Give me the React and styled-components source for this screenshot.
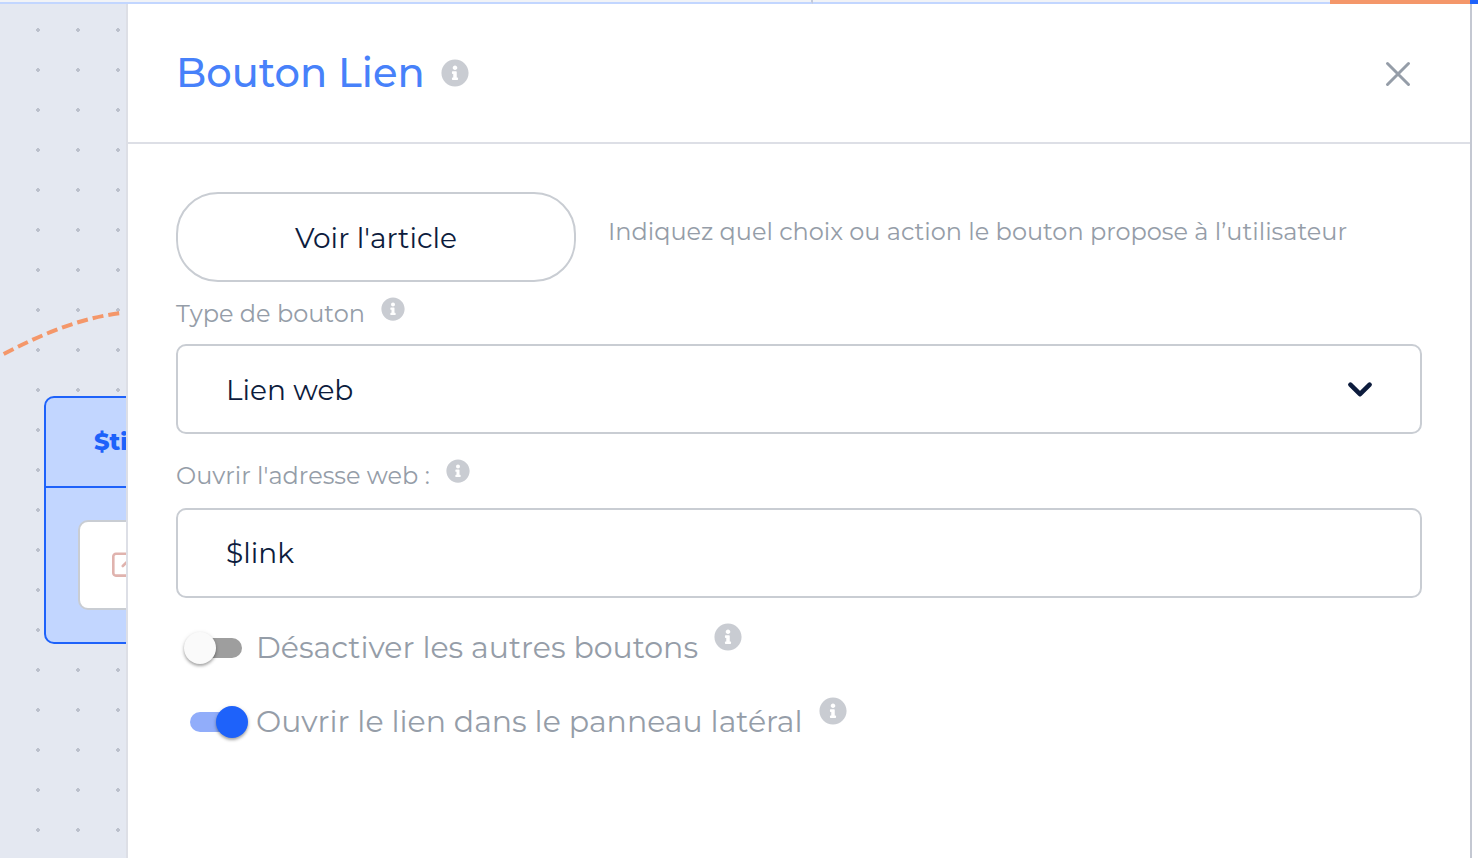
import React, { useState } from "react";
import styled, { createGlobalStyle } from "styled-components";
import { FaInfoCircle } from "react-icons/fa";

const color = {
  ink: "#0d1c3d",
  muted: "#959da8",
  line: "#c9cdd3",
  rule: "#dddfe6",
  edge: "#c4c8d2",
  info: "#c9ccd2",
  title: "#4781fa",
  blue: "#1e62fa",
  paleBlue: "#c2d6ff",
  orange: "#f4976a",
};

const GlobalStyle = createGlobalStyle`
  *, *::before, *::after { box-sizing: border-box; }
  body {
    margin: 0;
    background: #fff;
    font-family: Montserrat, Inter, "Liberation Sans", sans-serif;
    color: ${color.ink};
  }
`;

const Page = styled.div`
  display: flex;
  flex-direction: column;
  height: 100vh;
  overflow: hidden;
`;

const TopBar = styled.div`
  display: flex;
  flex: none;
  height: 4px;
`;

const TopSegment = styled.div`
  flex: ${(p) => p.$flex};
  background: #f1f3f7;
  border-bottom: 2px solid ${color.paleBlue};
  border-right: ${(p) => (p.$last ? "none" : "2px solid #c4cbdc")};
`;

const TopAccent = styled.div`
  flex: none;
  width: ${(p) => p.$width}px;
  background: ${(p) => p.$color};
`;

const Main = styled.main`
  display: flex;
  flex: 1;
  min-height: 0;
  padding-right: 6px;
`;

const Canvas = styled.section`
  position: relative;
  flex: none;
  width: 126px;
  overflow: hidden;
  background-color: #e4e8f1;
  background-image: radial-gradient(circle at 20px 20px, #bcc1cd 2px, transparent 2px);
  background-size: 40px 40px;
  background-position: 18px 6px;
`;

const Link = styled.svg`
  position: absolute;
  top: 296px;
  left: 0;
`;

const Node = styled.article`
  position: absolute;
  top: 392px;
  left: 44px;
  width: 480px;
  background: ${color.paleBlue};
  border: 2px solid ${color.blue};
  border-radius: 10px;
`;

const NodeTitle = styled.h2`
  margin: 0;
  padding: 0 48px;
  font-size: 24px;
  font-weight: 800;
  line-height: 88px;
  color: ${color.blue};
  border-bottom: 2px solid ${color.blue};
`;

const NodeBody = styled.div`
  padding: 32px;
`;

const NodeItem = styled.div`
  display: flex;
  align-items: center;
  height: 90px;
  padding: 0 32px;
  background: #fff;
  border: 2px solid ${color.line};
  border-radius: 10px;
`;

const Panel = styled.section`
  display: flex;
  flex: 1;
  flex-direction: column;
  min-width: 0;
  background: #fff;
  border-left: 2px solid ${color.rule};
  border-right: 2px solid ${color.edge};
`;

const Header = styled.header`
  display: flex;
  align-items: center;
  justify-content: space-between;
  height: 140px;
  padding: 0 48px;
  border-bottom: 2px solid ${color.rule};
`;

const TitleGroup = styled.div`
  display: flex;
  align-items: center;
  gap: 16px;
`;

const Title = styled.h1`
  margin: 0;
  font-size: 40px;
  font-weight: 500;
  line-height: 48px;
  color: ${color.title};
`;

const IconButton = styled.button`
  display: flex;
  flex: none;
  padding: 0;
  border: 0;
  background: none;
  color: ${(p) => p.$color || color.info};
  cursor: pointer;
`;

const CloseButton = styled(IconButton)`
  padding: 10px;
`;

const Form = styled.form`
  display: flex;
  flex-direction: column;
  padding: 48px;
`;

const ChoiceRow = styled.div`
  display: flex;
  align-items: center;
  gap: 32px;
`;

const TextField = styled.input`
  width: 100%;
  height: 90px;
  padding: 0 48px;
  font: inherit;
  font-size: 28px;
  color: ${color.ink};
  background: #fff;
  border: 2px solid ${color.line};
  border-radius: 10px;
  outline: none;
`;

const PillField = styled(TextField)`
  flex: none;
  width: 400px;
  padding-top: 2px;
  text-align: center;
  border-radius: 42px;
`;

const Hint = styled.label`
  padding-bottom: 10px;
  font-size: 24px;
  line-height: 28px;
  color: ${color.muted};
`;

const LabelRow = styled.div`
  display: flex;
  align-items: flex-start;
  gap: 16px;
  padding: ${(p) => p.$pad};
`;

const Label = styled.label`
  padding-top: ${(p) => (p.$large ? 7 : 3)}px;
  font-size: ${(p) => (p.$large ? 30 : 24)}px;
  line-height: ${(p) => (p.$large ? 36 : 28)}px;
  color: ${color.muted};
`;

const SelectBox = styled.div`
  display: grid;
  align-items: center;
  > * { grid-area: 1 / 1; }
  > svg {
    justify-self: end;
    margin-right: 48px;
    pointer-events: none;
  }
`;

const Select = styled.select`
  width: 100%;
  height: 90px;
  padding: 2px 48px 0;
  font: inherit;
  font-size: 28px;
  color: ${color.ink};
  background: #fff;
  border: 2px solid ${color.line};
  border-radius: 10px;
  appearance: none;
  outline: none;
`;

const SwitchList = styled.div`
  display: flex;
  flex-direction: column;
  gap: 31px;
  padding-top: 25px;
`;

const SwitchRow = styled.div`
  display: flex;
  align-items: flex-start;
  gap: 16px;
`;

const SwitchControl = styled.div`
  display: flex;
  align-items: flex-start;
  gap: 8px;
`;

const Switch = styled.input`
  display: flex;
  flex: none;
  align-items: center;
  width: 72px;
  height: 32px;
  margin: 9px 0 0;
  padding: 0 8px;
  appearance: none;
  cursor: pointer;

  &::before {
    content: "";
    width: 52px;
    height: 20px;
    margin-left: 6px;
    flex: none;
    border-radius: 10px;
    background: #9e9e9e;
  }
  &::after {
    content: "";
    flex: none;
    width: 32px;
    height: 32px;
    margin-left: -58px;
    border-radius: 50%;
    background: #fafafa;
    box-shadow: 0 2px 3px rgba(0, 0, 0, 0.3), 0 1px 5px rgba(0, 0, 0, 0.1);
  }
  &:checked::before { background: #91adfa; }
  &:checked::after {
    margin-left: -26px;
    background: ${color.blue};
  }
`;

const Info = ({ size = 28, label }) => (
  <IconButton type="button" aria-label={label}>
    <FaInfoCircle size={size} />
  </IconButton>
);

const CloseIcon = () => (
  <svg width="28" height="28" viewBox="0 0 28 28" fill="none" stroke="currentColor" strokeWidth="3" strokeLinecap="round">
    <path d="M3.5 4.5 24.5 25.5M24.5 4.5 3.5 25.5" />
  </svg>
);

const Chevron = () => (
  <svg width="28" height="20" viewBox="0 0 28 20" fill="none" stroke={color.ink} strokeWidth="4.6" strokeLinecap="round" strokeLinejoin="round">
    <path d="M4.4 5.6 14 15.2 23.6 5.6" />
  </svg>
);

const ExternalIcon = () => (
  <svg width="26" height="26" viewBox="0 0 26 26" fill="none" stroke="#e0b3ae" strokeWidth="2.6" strokeLinecap="round" strokeLinejoin="round">
    <path d="M24 13.5V21a2.6 2.6 0 0 1-2.6 2.6H3.9A2.6 2.6 0 0 1 1.3 21V4.400a2.6 2.600 0 0 1 2.6-2.6H15" />
    <path d="M10.800 14 22.500 2.500M17 1.800h7v7" />
  </svg>
);

function SwitchField({ id, text, checked, onChange }) {
  return (
    <SwitchRow>
      <SwitchControl>
        <Switch id={id} type="checkbox" role="switch" checked={checked} onChange={onChange} />
        <Label htmlFor={id} $large>{text}</Label>
      </SwitchControl>
      <Info label="Information" />
    </SwitchRow>
  );
}

export default function App() {
  const [text, setText] = useState("Voir l'article");
  const [link, setLink] = useState("$link");
  const [disableOthers, setDisableOthers] = useState(false);
  const [sidePanel, setSidePanel] = useState(true);

  return (
    <Page>
      <GlobalStyle />
      <TopBar>
        <TopSegment $flex={812} />
        <TopSegment $flex={518} $last />
        <TopAccent $width={140} $color={color.orange} />
        <TopAccent $width={8} $color={color.blue} />
      </TopBar>
      <Main>
        <Canvas>
          <Link width="126" height="64" viewBox="0 0 126 64" fill="none" stroke={color.orange} strokeWidth="4" strokeDasharray="11 5">
            <path d="M-6 59C30 40 75 18 122 13" strokeDashoffset="5" />
          </Link>
          <Node>
            <NodeTitle>$title</NodeTitle>
            <NodeBody>
              <NodeItem><ExternalIcon /></NodeItem>
            </NodeBody>
          </Node>
        </Canvas>
        <Panel>
          <Header>
            <TitleGroup>
              <Title>Bouton Lien</Title>
              <Info label="Information" />
            </TitleGroup>
            <CloseButton type="button" aria-label="Fermer" $color={color.muted}>
              <CloseIcon />
            </CloseButton>
          </Header>
          <Form onSubmit={(e) => e.preventDefault()}>
            <ChoiceRow>
              <PillField id="text" value={text} onChange={(e) => setText(e.target.value)} />
              <Hint htmlFor="text">Indiquez quel choix ou action le bouton propose à l’utilisateur</Hint>
            </ChoiceRow>
            <LabelRow $pad="15px 0 16px">
              <Label htmlFor="type">Type de bouton</Label>
              <Info size={24} label="Information" />
            </LabelRow>
            <SelectBox>
              <Select id="type" defaultValue="web">
                <option value="web">Lien web</option>
              </Select>
              <Chevron />
            </SelectBox>
            <LabelRow $pad="25px 0 18px">
              <Label htmlFor="link">Ouvrir l'adresse web :</Label>
              <Info size={24} label="Information" />
            </LabelRow>
            <TextField id="link" value={link} onChange={(e) => setLink(e.target.value)} />
            <SwitchList>
              <SwitchField
                id="disable"
                text="Désactiver les autres boutons"
                checked={disableOthers}
                onChange={(e) => setDisableOthers(e.target.checked)}
              />
              <SwitchField
                id="side"
                text="Ouvrir le lien dans le panneau latéral"
                checked={sidePanel}
                onChange={(e) => setSidePanel(e.target.checked)}
              />
            </SwitchList>
          </Form>
        </Panel>
      </Main>
    </Page>
  );
}
